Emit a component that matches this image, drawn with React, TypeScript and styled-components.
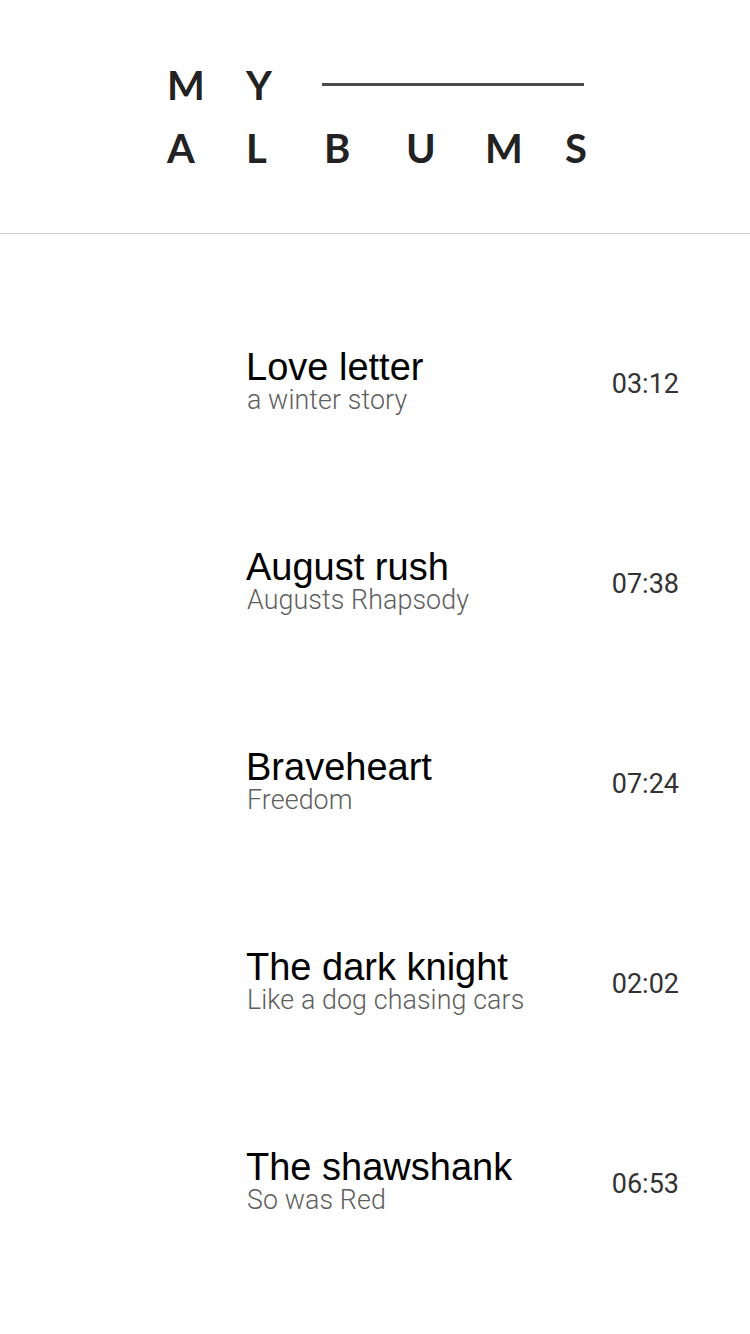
import React from "react";
import styled, { createGlobalStyle } from "styled-components";

const GlobalStyle = createGlobalStyle`
  html, body {
    margin: 0;
    padding: 0;
    background: #ffffff;
  }
  body {
    font-family: "Liberation Sans", Arial, sans-serif;
  }
`;

const Page = styled.div`
  width: 750px;
  min-height: 1334px;
  background: #ffffff;
`;

const Header = styled.header`
  height: 234px;
  box-sizing: border-box;
  border-bottom: 1px solid #cccccc;
  padding-top: 54px;
  display: flex;
  justify-content: center;
`;

const Logo = styled.div`
  width: 420px;
  margin-left: 4px;
  display: grid;
  grid-template-columns: 79px 78px 82px 79px 80px 1fr;
  grid-template-rows: 63px 63px;
  font-family: Lato, "Open Sans", sans-serif;
  font-weight: 700;
  font-size: 40px;
  line-height: 63px;
  color: #222222;
`;

const Letter = styled.span`
  display: block;
`;

const Rule = styled.span`
  grid-column: 3 / 7;
  align-self: center;
  height: 3px;
  margin-left: -2px;
  margin-right: 3px;
  margin-top: -2px;
  background: #4a4a4a;
`;

const List = styled.ul`
  list-style: none;
  margin: 0;
  padding: 48px 0 0;
`;

const Row = styled.li`
  height: 200px;
  display: flex;
  align-items: center;
  padding: 0 71px 0 247px;
`;

const Info = styled.div`
  flex: 1;
  display: flex;
  flex-direction: column;
`;

const Title = styled.div`
  font-family: "Liberation Sans", Arial, sans-serif;
  font-size: 38px;
  line-height: 36px;
  color: #000000;
  margin-left: -1px;
`;

const Subtitle = styled.div`
  font-family: Roboto, "Liberation Sans", sans-serif;
  font-weight: 300;
  font-size: 26.8px;
  line-height: 30px;
  letter-spacing: 0.1px;
  color: #5e5e5e;
`;

const Time = styled.div`
  font-family: Roboto, "Liberation Sans", sans-serif;
  font-size: 27px;
  line-height: 30px;
  color: #333333;
  margin-top: 4px;
`;

const albums = [
  { title: "Love letter", subtitle: "a winter story", time: "03:12" },
  { title: "August rush", subtitle: "Augusts Rhapsody", time: "07:38" },
  { title: "Braveheart", subtitle: "Freedom", time: "07:24" },
  { title: "The dark knight", subtitle: "Like a dog chasing cars", time: "02:02" },
  { title: "The shawshank", subtitle: "So was Red", time: "06:53" },
];

export default function App() {
  return (
    <Page>
      <GlobalStyle />
      <Header>
        <Logo>
          <Letter>M</Letter>
          <Letter>Y</Letter>
          <Rule />
          {"ALBUMS".split("").map((c, i) => (
            <Letter key={i}>{c}</Letter>
          ))}
        </Logo>
      </Header>
      <List>
        {albums.map((a) => (
          <Row key={a.title}>
            <Info>
              <Title>{a.title}</Title>
              <Subtitle>{a.subtitle}</Subtitle>
            </Info>
            <Time>{a.time}</Time>
          </Row>
        ))}
      </List>
    </Page>
  );
}
